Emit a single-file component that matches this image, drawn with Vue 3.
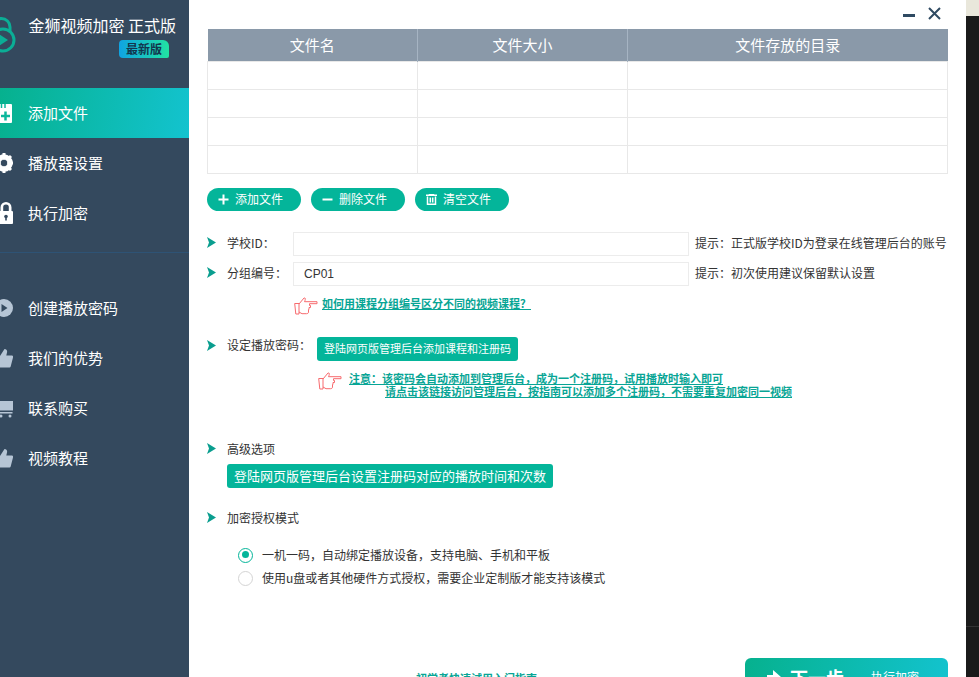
<template>
  <div class="app-window">
    <aside class="sidebar">
      <div class="brand">
        <svg class="logo" width="20" height="40" viewBox="0 0 20 40">
          <path d="M-7 14 V10 A8.500 8.500 0 0 1 10 10 V14" fill="none" stroke="#0bae96" stroke-width="3" />
          <circle cx="3" cy="23" r="11" fill="none" stroke="#0bae96" stroke-width="3" />
          <path d="M-1 17 L8 23 L-1 29 Z" fill="#0bae96" />
        </svg>
        <div class="brand-text">
          <div class="brand-title">金狮视频加密 正式版</div>
          <span class="brand-badge">最新版</span>
        </div>
      </div>

      <nav class="nav-group">
        <div v-for="item in topNav" :key="item.label" class="nav-item" :class="{ active: item.active }">
          <svg class="nav-icon" width="20" height="24" viewBox="0 0 20 24">
            <template v-if="item.icon === 'doc'">
              <rect x="0" y="3" width="19" height="19" rx="1" fill="#fff" />
              <path d="M8.500 3 V7 M12 3 V7" stroke="#0cb79c" stroke-width="1.500" />
              <path d="M8 15 H17 M12.500 10.500 V19.500" stroke="#0cb79c" stroke-width="2.500" />
            </template>
            <template v-else-if="item.icon === 'gear'">
              <circle cx="11" cy="12" r="6.500" fill="none" stroke="#fff" stroke-width="4.500" />
              <path d="M11 2 V22 M1 12 H21 M4 5 L18 19 M18 5 L4 19" stroke="#fff" stroke-width="3" />
              <circle cx="11" cy="12" r="3.200" fill="#34495e" />
            </template>
            <template v-else>
              <path d="M13 1 A5.500 5.500 0 0 1 18.500 6.500 V11 H15.800 V6.500 A2.800 2.800 0 0 0 13 3.500 A2.800 2.800 0 0 0 10.200 6.500 V11 H7.500 V6.500 A5.500 5.500 0 0 1 13 1 Z" fill="#fff" />
              <rect x="6" y="10" width="14" height="13" rx="1" fill="#fff" />
              <circle cx="13" cy="15.500" r="1.800" fill="#34495e" />
              <rect x="12.200" y="15.500" width="1.600" height="4" fill="#34495e" />
            </template>
          </svg>
          <span>{{ item.label }}</span>
        </div>
      </nav>

      <div class="nav-divider"></div>

      <nav class="nav-group nav-lower">
        <div v-for="item in lowerNav" :key="item.label" class="nav-item">
          <svg class="nav-icon" width="20" height="24" viewBox="0 0 20 24">
            <template v-if="item.icon === 'play'">
              <circle cx="11" cy="12" r="9" fill="#b6c5d5" />
              <path d="M8.500 8 L14.500 12 L8.500 16 Z" fill="#34495e" />
            </template>
            <template v-else-if="item.icon === 'thumb'">
              <path d="M7 10 L11.500 3 C13.500 3 14.500 4.500 14 6.500 L13.300 9.500 H19 C20 9.500 20.300 10.500 20 11.500 L17.800 20 C17.600 21 17 21.500 16 21.500 H7 Z" fill="#b6c5d5" />
              <rect x="1" y="10" width="4.500" height="11.500" fill="#b6c5d5" />
            </template>
            <template v-else>
              <path d="M1 5 H20 V14.500 H7 V16 H19.500 V17.500 H5 V5 Z" fill="#b6c5d5" />
              <circle cx="8" cy="20" r="1.500" fill="#b6c5d5" />
              <circle cx="17" cy="20" r="1.500" fill="#b6c5d5" />
            </template>
          </svg>
          <span>{{ item.label }}</span>
        </div>
      </nav>
    </aside>

    <main class="content">
      <div class="window-bar">
        <span class="win-min"></span>
        <svg class="win-close" width="13" height="13" viewBox="0 0 13 13">
          <path d="M1 1 L12 12 M12 1 L1 12" stroke="#2f4a62" stroke-width="2" />
        </svg>
      </div>

      <table class="file-table">
        <colgroup>
          <col class="col-name" />
          <col class="col-size" />
          <col />
        </colgroup>
        <thead>
          <tr>
            <th>文件名</th>
            <th>文件大小</th>
            <th>文件存放的目录</th>
          </tr>
        </thead>
        <tbody>
          <tr v-for="n in 4" :key="n">
            <td></td>
            <td></td>
            <td></td>
          </tr>
        </tbody>
      </table>

      <div class="file-actions">
        <button class="pill">
          <svg width="11" height="11" viewBox="0 0 11 11"><path d="M0.500 5.500 H10.500 M5.500 0.500 V10.500" stroke="#fff" stroke-width="2" /></svg>
          <span>添加文件</span>
        </button>
        <button class="pill">
          <svg width="11" height="11" viewBox="0 0 11 11"><path d="M0.500 5.500 H10.500" stroke="#fff" stroke-width="2" /></svg>
          <span>删除文件</span>
        </button>
        <button class="pill">
          <svg width="11" height="11" viewBox="0 0 11 11">
            <path d="M0 1.200 H11 M3.500 1 V0 H7.500 V1 M1.500 2.500 V10.300 H9.500 V2.500 M4.300 3.500 V8.500 M6.700 3.500 V8.500" fill="none" stroke="#fff" stroke-width="1.500" />
          </svg>
          <span>清空文件</span>
        </button>
      </div>

      <div class="form-row first-row">
        <svg class="arrow" width="9" height="11" viewBox="0 0 9 11"><path d="M0 0 L9 5.500 L0 11 L2 5.500 Z" /></svg>
        <label>{{ labels.school }}</label>
        <input type="text" />
        <span class="hint">{{ labels.schoolHint }}</span>
      </div>
      <div class="form-row second-row">
        <svg class="arrow" width="9" height="11" viewBox="0 0 9 11"><path d="M0 0 L9 5.500 L0 11 L2 5.500 Z" /></svg>
        <label>{{ labels.group }}</label>
        <input type="text" value="CP01" />
        <span class="hint">{{ labels.groupHint }}</span>
      </div>

      <div class="tip-row group-tip">
        <svg class="hand" width="24" height="18" viewBox="0 0 24 18">
          <path d="M0.700 6.500 H5 V17 H1.800 Z M5 7 L10 1 C11.500 0.500 11.500 2 11 3.500 L10.500 4.700 H23 V6.700 H15.500 V8.500 H16.500 V10.500 H15 V12.500 H14.500 V15 C14.500 16.300 13.500 16.700 12.500 16.700 H8 L5 15" fill="#fff" stroke="#f76a6e" stroke-width="1" />
        </svg>
        <a class="tip-link">{{ labels.groupLink }}</a>
      </div>

      <div class="password-row">
        <svg class="arrow" width="9" height="11" viewBox="0 0 9 11"><path d="M0 0 L9 5.500 L0 11 L2 5.500 Z" /></svg>
        <label>{{ labels.password }}</label>
        <button class="solid small">登陆网页版管理后台添加课程和注册码</button>
      </div>

      <div class="tip-row note-tip">
        <svg class="hand" width="24" height="18" viewBox="0 0 24 18">
          <path d="M0.700 6.500 H5 V17 H1.800 Z M5 7 L10 1 C11.500 0.500 11.500 2 11 3.500 L10.500 4.700 H23 V6.700 H15.500 V8.500 H16.500 V10.500 H15 V12.500 H14.500 V15 C14.500 16.300 13.500 16.700 12.500 16.700 H8 L5 15" fill="#fff" stroke="#f76a6e" stroke-width="1" />
        </svg>
        <a class="tip-link note-text">
          <span>{{ labels.noteOne }}</span>
          <span class="note-second">{{ labels.noteTwo }}</span>
        </a>
      </div>

      <div class="section-head advanced-head">
        <svg class="arrow" width="9" height="11" viewBox="0 0 9 11"><path d="M0 0 L9 5.500 L0 11 L2 5.500 Z" /></svg>
        <label>高级选项</label>
      </div>
      <button class="solid large">登陆网页版管理后台设置注册码对应的播放时间和次数</button>

      <div class="section-head auth-head">
        <svg class="arrow" width="9" height="11" viewBox="0 0 9 11"><path d="M0 0 L9 5.500 L0 11 L2 5.500 Z" /></svg>
        <label>加密授权模式</label>
      </div>

      <div class="radio-list">
        <div v-for="opt in authModes" :key="opt.label" class="radio-row">
          <span class="radio" :class="{ checked: opt.checked }"></span>
          <span class="radio-text">{{ opt.label }}</span>
        </div>
      </div>

      <div class="footer-row">
        <a class="guide-link">初学者快速试用入门指南</a>
        <button class="next-button">
          <svg width="14" height="14" viewBox="0 0 14 14"><path d="M0 5 H6 V0 L14 7 L6 14 V9 H0 Z" fill="#fff" /></svg>
          <strong>下一步</strong>
          <span>执行加密</span>
        </button>
      </div>
    </main>

    <div class="desk-strip">
      <div class="strip-top"></div>
      <div class="strip-line"></div>
    </div>
  </div>
</template>

<script setup>
const topNav = [
  { label: '添加文件', icon: 'doc', active: true },
  { label: '播放器设置', icon: 'gear' },
  { label: '执行加密', icon: 'lock' }
]

const lowerNav = [
  { label: '创建播放密码', icon: 'play' },
  { label: '我们的优势', icon: 'thumb' },
  { label: '联系购买', icon: 'cart' },
  { label: '视频教程', icon: 'thumb' }
]

// full-width punctuation, written as escapes so it can't get flattened to ascii
const labels = {
  school: '学校ID\uFF1A',
  schoolHint: '提示\uFF1A正式版学校ID为登录在线管理后台的账号',
  group: '分组编号\uFF1A',
  groupHint: '提示\uFF1A初次使用建议保留默认设置',
  groupLink: '如何用课程分组编号区分不同的视频课程\uFF1F',
  password: '设定播放密码\uFF1A',
  noteOne: '注意\uFF1A该密码会自动添加到管理后台\uFF0C成为一个注册码\uFF0C试用播放时输入即可',
  noteTwo: '请点击该链接访问管理后台\uFF0C按指南可以添加多个注册码\uFF0C不需要重复加密同一视频'
}

const authModes = [
  { label: '一机一码\uFF0C自动绑定播放设备\uFF0C支持电脑、手机和平板', checked: true },
  { label: '使用u盘或者其他硬件方式授权\uFF0C需要企业定制版才能支持该模式', checked: false }
]
</script>

<style>
html,
body {
  margin: 0;
  overflow: hidden;
  background: #fff;
}
</style>

<style scoped>
.app-window {
  display: flex;
  width: 979px;
  height: 677px;
  overflow: hidden;
  font-family: "Noto Sans CJK SC", "Liberation Sans", sans-serif;
  color: #333;
}

/* sidebar */
.sidebar {
  width: 189px;
  flex: none;
  background: #34495e;
  color: #fff;
}

.brand {
  display: flex;
  height: 88px;
  box-sizing: border-box;
  padding-top: 14px;
}

.logo {
  flex: none;
  margin-right: 6px;
  margin-top: 3px;
}

.brand-text {
  display: flex;
  flex-direction: column;
  align-items: flex-end;
  width: 150px;
}

.brand-title {
  font-size: 16px;
  line-height: 22px;
  white-space: nowrap;
}

.brand-badge {
  margin-top: 4px;
  margin-right: 7px;
  width: 50px;
  height: 18px;
  line-height: 18px;
  text-align: center;
  font-size: 12px;
  font-weight: 700;
  color: #12364d;
  background: linear-gradient(90deg, #0fa3e2, #22e2a2);
  border-radius: 4px 6px 2px 4px;
}

.nav-item {
  display: flex;
  align-items: center;
  height: 50px;
  font-size: 15px;
}

.nav-item span {
  padding-bottom: 2px;
}

.nav-item.active {
  background: linear-gradient(100deg, #06b18e, #13c3cf);
}

.nav-icon {
  flex: none;
  margin-left: -7px;
  margin-right: 15px;
}

.nav-divider {
  height: 1px;
  margin-top: 14px;
  background: #2e5375;
}

.nav-lower {
  margin-top: 30px;
}

/* main panel */
.content {
  flex: 1;
  min-width: 0;
  background: #fff;
  padding-left: 18px;
  padding-right: 18px;
}

.window-bar {
  display: flex;
  justify-content: flex-end;
  align-items: flex-start;
  height: 29px;
  padding-right: 7px;
  box-sizing: border-box;
}

.win-min {
  width: 12px;
  height: 3px;
  margin-top: 14px;
  margin-right: 13px;
  background: #2f4a62;
}

.win-close {
  margin-top: 7px;
}

.file-table {
  width: 741px;
  border-collapse: collapse;
  table-layout: fixed;
}

.col-name,
.col-size {
  width: 210px;
}

.file-table th {
  height: 32px;
  padding: 0;
  box-sizing: border-box;
  font-size: 15px;
  font-weight: 400;
  color: #fff;
  background: #8a99a9;
  border-left: 1px solid #a6b4c3;
}

.file-table th:first-child {
  border-left: 0;
}

.file-table td {
  height: 27px;
  padding: 0;
  border: 1px solid #e8e8e8;
}

.file-actions {
  display: flex;
  gap: 10px;
  margin-top: 14px;
}

.pill {
  display: flex;
  align-items: center;
  gap: 6px;
  width: 94px;
  height: 23px;
  padding: 0 0 0 11px;
  border: 0;
  border-radius: 12px;
  background: #04b59a;
  color: #fff;
  font: 12px "Noto Sans CJK SC", sans-serif;
}

.pill span {
  padding-bottom: 2px;
}

.form-row,
.password-row,
.section-head {
  display: flex;
  align-items: center;
  font-size: 12px;
}

.form-row label,
.hint {
  padding-bottom: 3px;
}

.section-head label {
  padding-bottom: 1px;
}

.form-row label {
  width: 66px;
  flex: none;
}

.form-row input {
  width: 396px;
  height: 24px;
  flex: none;
  box-sizing: border-box;
  padding: 0 10px;
  border: 1px solid #ececec;
  outline: 0;
  color: #333;
  font: 12px "Liberation Sans", sans-serif;
}

.first-row {
  margin-top: 21px;
}

.second-row {
  margin-top: 6px;
}

.arrow {
  flex: none;
  margin-right: 11px;
  fill: #0a9e8f;
}

.form-row .arrow {
  margin-bottom: 2px;
}

.hint {
  margin-left: 6px;
  white-space: nowrap;
}

.tip-row {
  display: flex;
}

.hand {
  flex: none;
}

.tip-link {
  font-size: 11px;
  font-weight: 700;
  color: #08a595;
  text-decoration: underline;
  white-space: pre;
}

.group-tip {
  margin-top: 11px;
  margin-left: 87px;
  height: 18px;
  align-items: center;
}

.group-tip .tip-link {
  margin-left: 4px;
  margin-top: -5px;
}

.password-row {
  align-items: flex-start;
  margin-top: 22px;
  height: 24px;
}

.password-row .arrow {
  margin-top: 3px;
}

.password-row label {
  width: 90px;
  flex: none;
  line-height: 16px;
}

.solid {
  display: block;
  border: 0;
  padding: 0 0 1px;
  border-radius: 3px;
  background: #04b59a;
  color: #fff;
  font-family: "Noto Sans CJK SC", sans-serif;
}

.solid.small {
  width: 201px;
  height: 24px;
  font-size: 11px;
}

.solid.large {
  width: 326px;
  height: 24px;
  margin-left: 20px;
  margin-top: 6px;
  font-size: 13px;
}

.note-tip {
  margin-top: 11px;
  margin-left: 111px;
  height: 68px;
}

.note-text {
  display: flex;
  flex-direction: column;
  margin-left: 7px;
  line-height: 13px;
}

.note-second {
  margin-left: 36px;
}

.advanced-head {
  height: 18px;
}

.auth-head {
  height: 18px;
  margin-top: 21px;
}

.radio-list {
  margin-top: 17px;
  margin-left: 31px;
}

.radio-row {
  display: flex;
  align-items: center;
  gap: 9px;
  height: 23px;
  font-size: 12px;
}

.radio-text {
  padding-bottom: 2px;
}

.radio {
  position: relative;
  flex: none;
  box-sizing: border-box;
  width: 15px;
  height: 15px;
  border: 1px solid #d4d4d4;
  border-radius: 50%;
  background: #fff;
}

.radio.checked {
  border: 1.5px solid #04b59a;
}

.radio.checked::after {
  content: "";
  position: absolute;
  left: 2.5px;
  top: 2.5px;
  width: 7px;
  height: 7px;
  border-radius: 50%;
  background: #04b59a;
}

.footer-row {
  display: flex;
  align-items: flex-start;
  margin-top: 68px;
  margin-left: 209px;
}

.guide-link {
  margin-top: 13px;
  font-size: 11px;
  line-height: 14px;
  color: #08a595;
  font-weight: 700;
  white-space: nowrap;
}

.next-button {
  display: flex;
  align-items: center;
  flex: none;
  width: 203px;
  height: 38px;
  margin-left: 208px;
  padding: 0 0 0 22px;
  border: 0;
  border-radius: 6px;
  background: linear-gradient(100deg, #06b18e, #13c3cf);
  color: #fff;
  font-family: "Noto Sans CJK SC", sans-serif;
}

.next-button strong {
  margin-left: 9px;
  font-size: 18px;
  font-weight: 700;
}

.next-button span {
  margin-left: 27px;
  font-size: 12px;
}

/* what shows of the desktop beside the window */
.desk-strip {
  position: relative;
  flex: none;
  width: 13px;
  background: #1a1a1a;
}

.strip-top {
  height: 16px;
  background: #e9e7db;
}

.strip-line {
  position: absolute;
  left: 0;
  right: 0;
  top: 626px;
  height: 1px;
  background: #333;
}
</style>
